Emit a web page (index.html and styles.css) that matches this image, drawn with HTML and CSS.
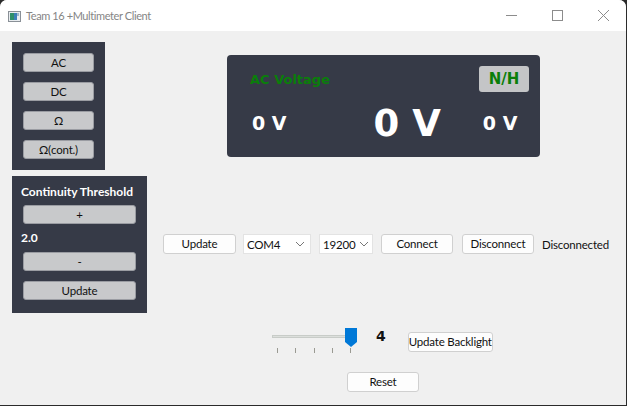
FILE: index.html
```html
<!DOCTYPE html>
<html>
<head>
<meta charset="utf-8">
<link rel="stylesheet" href="styles.css">
</head>
<body>
<div class="window">
  <div class="titlebar">
    <svg class="appicon" width="13" height="11" viewBox="0 0 13 11">
      <rect x="0.5" y="0.5" width="12" height="10" fill="#e8ecef" stroke="#8a9097"/>
      <rect x="2" y="2" width="4" height="7" fill="#2f8f6a"/>
      <rect x="6" y="2" width="3" height="7" fill="#3d7fb8"/>
      <rect x="9" y="2" width="2" height="3" fill="#9bb6cc"/>
    </svg>
    <span class="title">Team 16 +Multimeter Client</span>
    <div class="controls">
      <svg width="46" height="31" viewBox="0 0 46 31"><line x1="18" y1="15.5" x2="29" y2="15.5" stroke="#8c8c8c" stroke-width="1"/></svg>
      <svg width="46" height="31" viewBox="0 0 46 31"><rect x="18.5" y="10.5" width="10" height="10" fill="none" stroke="#8c8c8c" stroke-width="1"/></svg>
      <svg width="46" height="31" viewBox="0 0 46 31"><path d="M18 10 L29 21 M29 10 L18 21" stroke="#8c8c8c" stroke-width="1"/></svg>
    </div>
  </div>
  <div class="content">
    <div class="leftcol">
      <div class="panel modes">
        <button class="gbtn">AC</button>
        <button class="gbtn">DC</button>
        <button class="gbtn">Ω</button>
        <button class="gbtn">Ω(cont.)</button>
      </div>
      <div class="panel thresh">
        <div class="plabel">Continuity Threshold</div>
        <button class="gbtn wide">+</button>
        <div class="plabel val">2.0</div>
        <button class="gbtn wide">-</button>
        <button class="gbtn wide">Update</button>
      </div>
    </div>
    <div class="rightcol">
      <div class="display">
        <div class="dtop">
          <span class="mode">AC Voltage</span>
          <span class="nh">N/H</span>
        </div>
        <div class="dvals">
          <span class="small">0 V</span>
          <span class="big">0 V</span>
          <span class="small">0 V</span>
        </div>
      </div>
      <div class="connrow">
        <button class="wbtn w73">Update</button>
        <div class="combo w68"><span>COM4</span><svg width="10" height="6" viewBox="0 0 10 6"><path d="M1 1 L5 5 L9 1" fill="none" stroke="#777" stroke-width="1"/></svg></div>
        <div class="combo w54"><span>19200</span><svg width="10" height="6" viewBox="0 0 10 6"><path d="M1 1 L5 5 L9 1" fill="none" stroke="#777" stroke-width="1"/></svg></div>
        <button class="wbtn w72">Connect</button>
        <button class="wbtn w72 disc">Disconnect</button>
        <span class="status">Disconnected</span>
      </div>
      <div class="sliderrow">
        <div class="slider">
          <div class="track"></div>
          <svg class="handle" width="12" height="19" viewBox="0 0 12 19"><path d="M0 0 H12 V14 L6 19 L0 14 Z" fill="#0078d7"/></svg>
          <div class="ticks"><i></i><i></i><i></i><i></i><i></i></div>
        </div>
        <span class="level">4</span>
        <button class="wbtn bl">Update Backlight</button>
      </div>
      <button class="wbtn reset">Reset</button>
    </div>
  </div>
</div>
</body>
</html>
```
FILE: styles.css
```css
* { box-sizing: border-box; }
html, body { margin: 0; padding: 0; }
body {
  width: 627px; height: 406px; overflow: hidden;
  background: #2b2b2b;
  font-family: Lato, "Noto Sans", sans-serif;
  font-size: 11.5px;
  letter-spacing: -0.2px;
}
.window {
  width: 626px; height: 405px;
  background: #f0f0f0;
  border-radius: 7px 7px 0 0;
  overflow: hidden;
}
.titlebar {
  height: 31px; background: #ffffff;
  display: flex; align-items: center;
}
.appicon { margin-left: 8px; margin-top: 2px; }
.title { margin-left: 5px; color: #858585; font-size: 11px; letter-spacing: -0.4px; }
.controls { margin-left: auto; display: flex; }
.controls svg { display: block; }
.content { display: flex; }
.leftcol { width: 147px; padding: 11px 0 0 12px; display: flex; flex-direction: column; gap: 6px; }
.panel { background: #363a47; display: flex; flex-direction: column; align-items: flex-start; }
.modes { width: 93px; height: 128px; padding: 11px 0 0 11px; gap: 10px; }
.thresh { width: 135px; height: 137px; padding: 8px 0 0 9px; }
button { white-space: nowrap; }
.gbtn {
  font-family: inherit; font-size: 11.5px; letter-spacing: -0.2px; color: #111;
  background: #c8c9cb; border: 1px solid #9a9ca2; border-radius: 3px;
  width: 71px; height: 19px; padding: 0; line-height: 17px;
}
.gbtn.wide { width: 113px; margin-left: 2px; }
.thresh .gbtn + .gbtn { margin-top: 10px; }
.plabel { color: #fff; font-weight: bold; font-size: 12px; letter-spacing: 0; height: 18px; line-height: 16px; margin-bottom: 3px; }
.plabel.val { margin-top: 6px; margin-bottom: 4px; }
.rightcol { display: flex; flex-direction: column; align-items: flex-start; }
.display {
  margin: 24px 0 0 80px; width: 313px; height: 102px;
  background: #363a47; border-radius: 4px;
  font-family: "DejaVu Sans", Verdana, sans-serif; font-weight: bold; letter-spacing: 0;
  padding: 11px 11px 0 23px;
}
.dtop { display: flex; justify-content: space-between; align-items: center; height: 26px; }
.mode { color: #0a7e0a; font-size: 13px; }
.nh {
  background: #c4c5c7; color: #0a7e0a; font-size: 15px;
  width: 50px; height: 26px; border-radius: 3px;
  display: flex; align-items: center; justify-content: center;
}
.dvals { display: flex; align-items: center; height: 62px; padding-left: 2px; }
.small { color: #fff; font-size: 19px; }
.big { color: #fff; font-size: 37px; margin-left: 87px; }
.dvals .small:last-child { margin-left: 42px; }
.connrow { display: flex; align-items: center; margin: 77px 0 0 16px; height: 20px; }
.wbtn {
  font-family: inherit; font-size: 11.5px; letter-spacing: -0.2px; color: #111;
  background: #fdfdfd; border: 1px solid #d0d0d0; border-radius: 3px;
  height: 20px; padding: 0; line-height: 18px;
}
.w73 { width: 73px; }
.w72 { width: 72px; }
.combo {
  height: 20px; background: #fff; border: 1px solid #e3e3e3;
  display: flex; align-items: center; justify-content: space-between;
  padding: 0 5px 0 3px; color: #111;
}
.w68 { width: 68px; margin-left: 7px; }
.w54 { width: 54px; margin-left: 8px; margin-right: 8px; padding-right: 3px; }
.disc { margin-left: 9px; }
.status { margin-left: 8px; color: #111; }
.sliderrow { display: flex; align-items: flex-start; margin: 74px 0 0 123px; height: 25px; }
.slider { position: relative; width: 90px; height: 25px; }
.track { position: absolute; left: 2px; top: 7px; width: 78px; height: 3px; background: #dcdfdc; border: 1px solid #c8ccc8; }
.handle { position: absolute; left: 75px; top: 0; }
.ticks i { position: absolute; top: 20px; width: 1px; height: 5px; background: #9a9a92; }
.ticks i:nth-child(1) { left: 7px; }
.ticks i:nth-child(2) { left: 25px; }
.ticks i:nth-child(3) { left: 44px; }
.ticks i:nth-child(4) { left: 62px; }
.ticks i:nth-child(5) { left: 80px; }
.level { font-family: "DejaVu Sans", sans-serif; font-weight: bold; font-size: 14px; letter-spacing: 0; margin-left: 16px; line-height: 17px; color: #111; }
.bl { width: 85px; margin: 4px 0 0 22px; }
.reset { width: 72px; margin: 19px 0 0 200px; }
```
